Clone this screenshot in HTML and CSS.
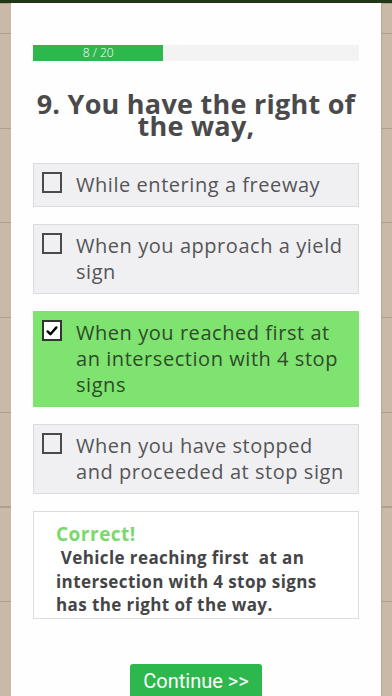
FILE: index.html
```html
<!DOCTYPE html>
<html>
<head>
<meta charset="utf-8">
<link rel="stylesheet" href="styles.css">
</head>
<body>
<div class="top-strip"></div>
<div class="wall">
  <div class="side"></div>
  <main class="card">
    <div class="progress">
      <div class="progress-fill" style="width:40%"><span>8 / 20</span></div>
    </div>
    <h1 class="question">9. You have the right of the way,</h1>
    <div class="options">
      <div class="option">
        <span class="box"></span>
        <span class="label">While entering a freeway</span>
      </div>
      <div class="option">
        <span class="box"></span>
        <span class="label">When you approach a yield sign</span>
      </div>
      <div class="option option-correct">
        <span class="box box-checked">
          <svg viewBox="0 0 20 20" width="16" height="16"><path d="M4.5 10.5 L8 14 L15.5 5.5" fill="none" stroke="#000" stroke-width="3" stroke-linecap="round" stroke-linejoin="round"/></svg>
        </span>
        <span class="label">When you reached first at an intersection with 4 stop signs</span>
      </div>
      <div class="option">
        <span class="box"></span>
        <span class="label">When you have stopped and proceeded at stop sign</span>
      </div>
    </div>
    <div class="explanation">
      <div class="verdict">Correct!</div>
      <div class="explain-text">&nbsp;Vehicle reaching first&nbsp; at an intersection with 4 stop signs has the right of the way.</div>
    </div>
    <div class="actions">
      <button class="continue">Continue &gt;&gt;</button>
    </div>
  </main>
  <div class="side side-right"></div>
</div>
</body>
</html>
```

FILE: styles.css
```css
html, body {
  margin: 0;
  padding: 0;
  height: 100%;
  overflow: hidden;
}
body {
  background: #c9b8a5;
  font-family: "Open Sans", "DejaVu Sans", sans-serif;
}
.top-strip {
  height: 3px;
  background: #1f3716;
}
.wall {
  display: flex;
  height: 693px;
}
.side {
  width: 11px;
  flex: none;
  background-color: #cab9a6;
  background-image: repeating-linear-gradient(to bottom, #b09f8c 0, #b09f8c 1px, transparent 1px, transparent 94.7px);
  background-position: 0 30px;
}
.side-right {
  border-left: 1px solid #b8a794;
  width: 10px;
}
.card {
  flex: 1;
  background: #fdfefd;
  padding: 42px 22px 0 22px;
  overflow: hidden;
}
.progress {
  height: 16px;
  background: #f3f3f4;
}
.progress-fill {
  height: 100%;
  background: #2db84e;
  display: flex;
  align-items: center;
  justify-content: center;
  color: #ffffff;
  font-size: 12px;
  font-weight: 300;
  line-height: 16px;
}
.question {
  margin: 32px 0 0 0;
  text-align: center;
  font-size: 27px;
  line-height: 22px;
  letter-spacing: 0.25px;
  font-weight: 700;
  color: #4a4a4c;
  padding: 0;
}
.options {
  margin-top: 26px;
  display: flex;
  flex-direction: column;
  gap: 17px;
}
.option {
  display: flex;
  align-items: flex-start;
  gap: 14px;
  padding: 8px;
  background: #f0f0f2;
  border: 1px solid #dcdcde;
}
.option-correct {
  background: #7fe36f;
  border-color: #7fe36f;
}
.box {
  flex: none;
  width: 16px;
  height: 17px;
  border: 2px solid #4a4a4a;
  background: transparent;
  display: flex;
  align-items: center;
  justify-content: center;
}
.box-checked {
  background: #ffffff;
  border-color: #333;
}
.label {
  font-size: 20px;
  line-height: 26px;
  letter-spacing: 0.55px;
  color: #555558;
  font-weight: 400;
}
.option-correct .label {
  color: #2f4a2c;
}
.explanation {
  margin-top: 17px;
  border: 1px solid #dddddd;
  background: #ffffff;
  padding: 10px 30px 1px 22px;
}
.verdict {
  font-size: 19px;
  line-height: 24px;
  letter-spacing: 0.5px;
  font-weight: 700;
  color: #7bd86b;
}
.explain-text {
  font-size: 17px;
  line-height: 23.5px;
  letter-spacing: 0.4px;
  font-weight: 700;
  color: #454547;
}
.actions {
  display: flex;
  justify-content: center;
  margin-top: 45px;
}
.continue {
  width: 132px;
  height: 42px;
  border: none;
  border-radius: 3px;
  background: #2db84e;
  color: #ffffff;
  font-family: Roboto, "Liberation Sans", sans-serif;
  font-size: 20px;
  line-height: 24px;
  padding: 5px 0 0 0;
  display: flex;
  justify-content: center;
  align-items: flex-start;
}
```
